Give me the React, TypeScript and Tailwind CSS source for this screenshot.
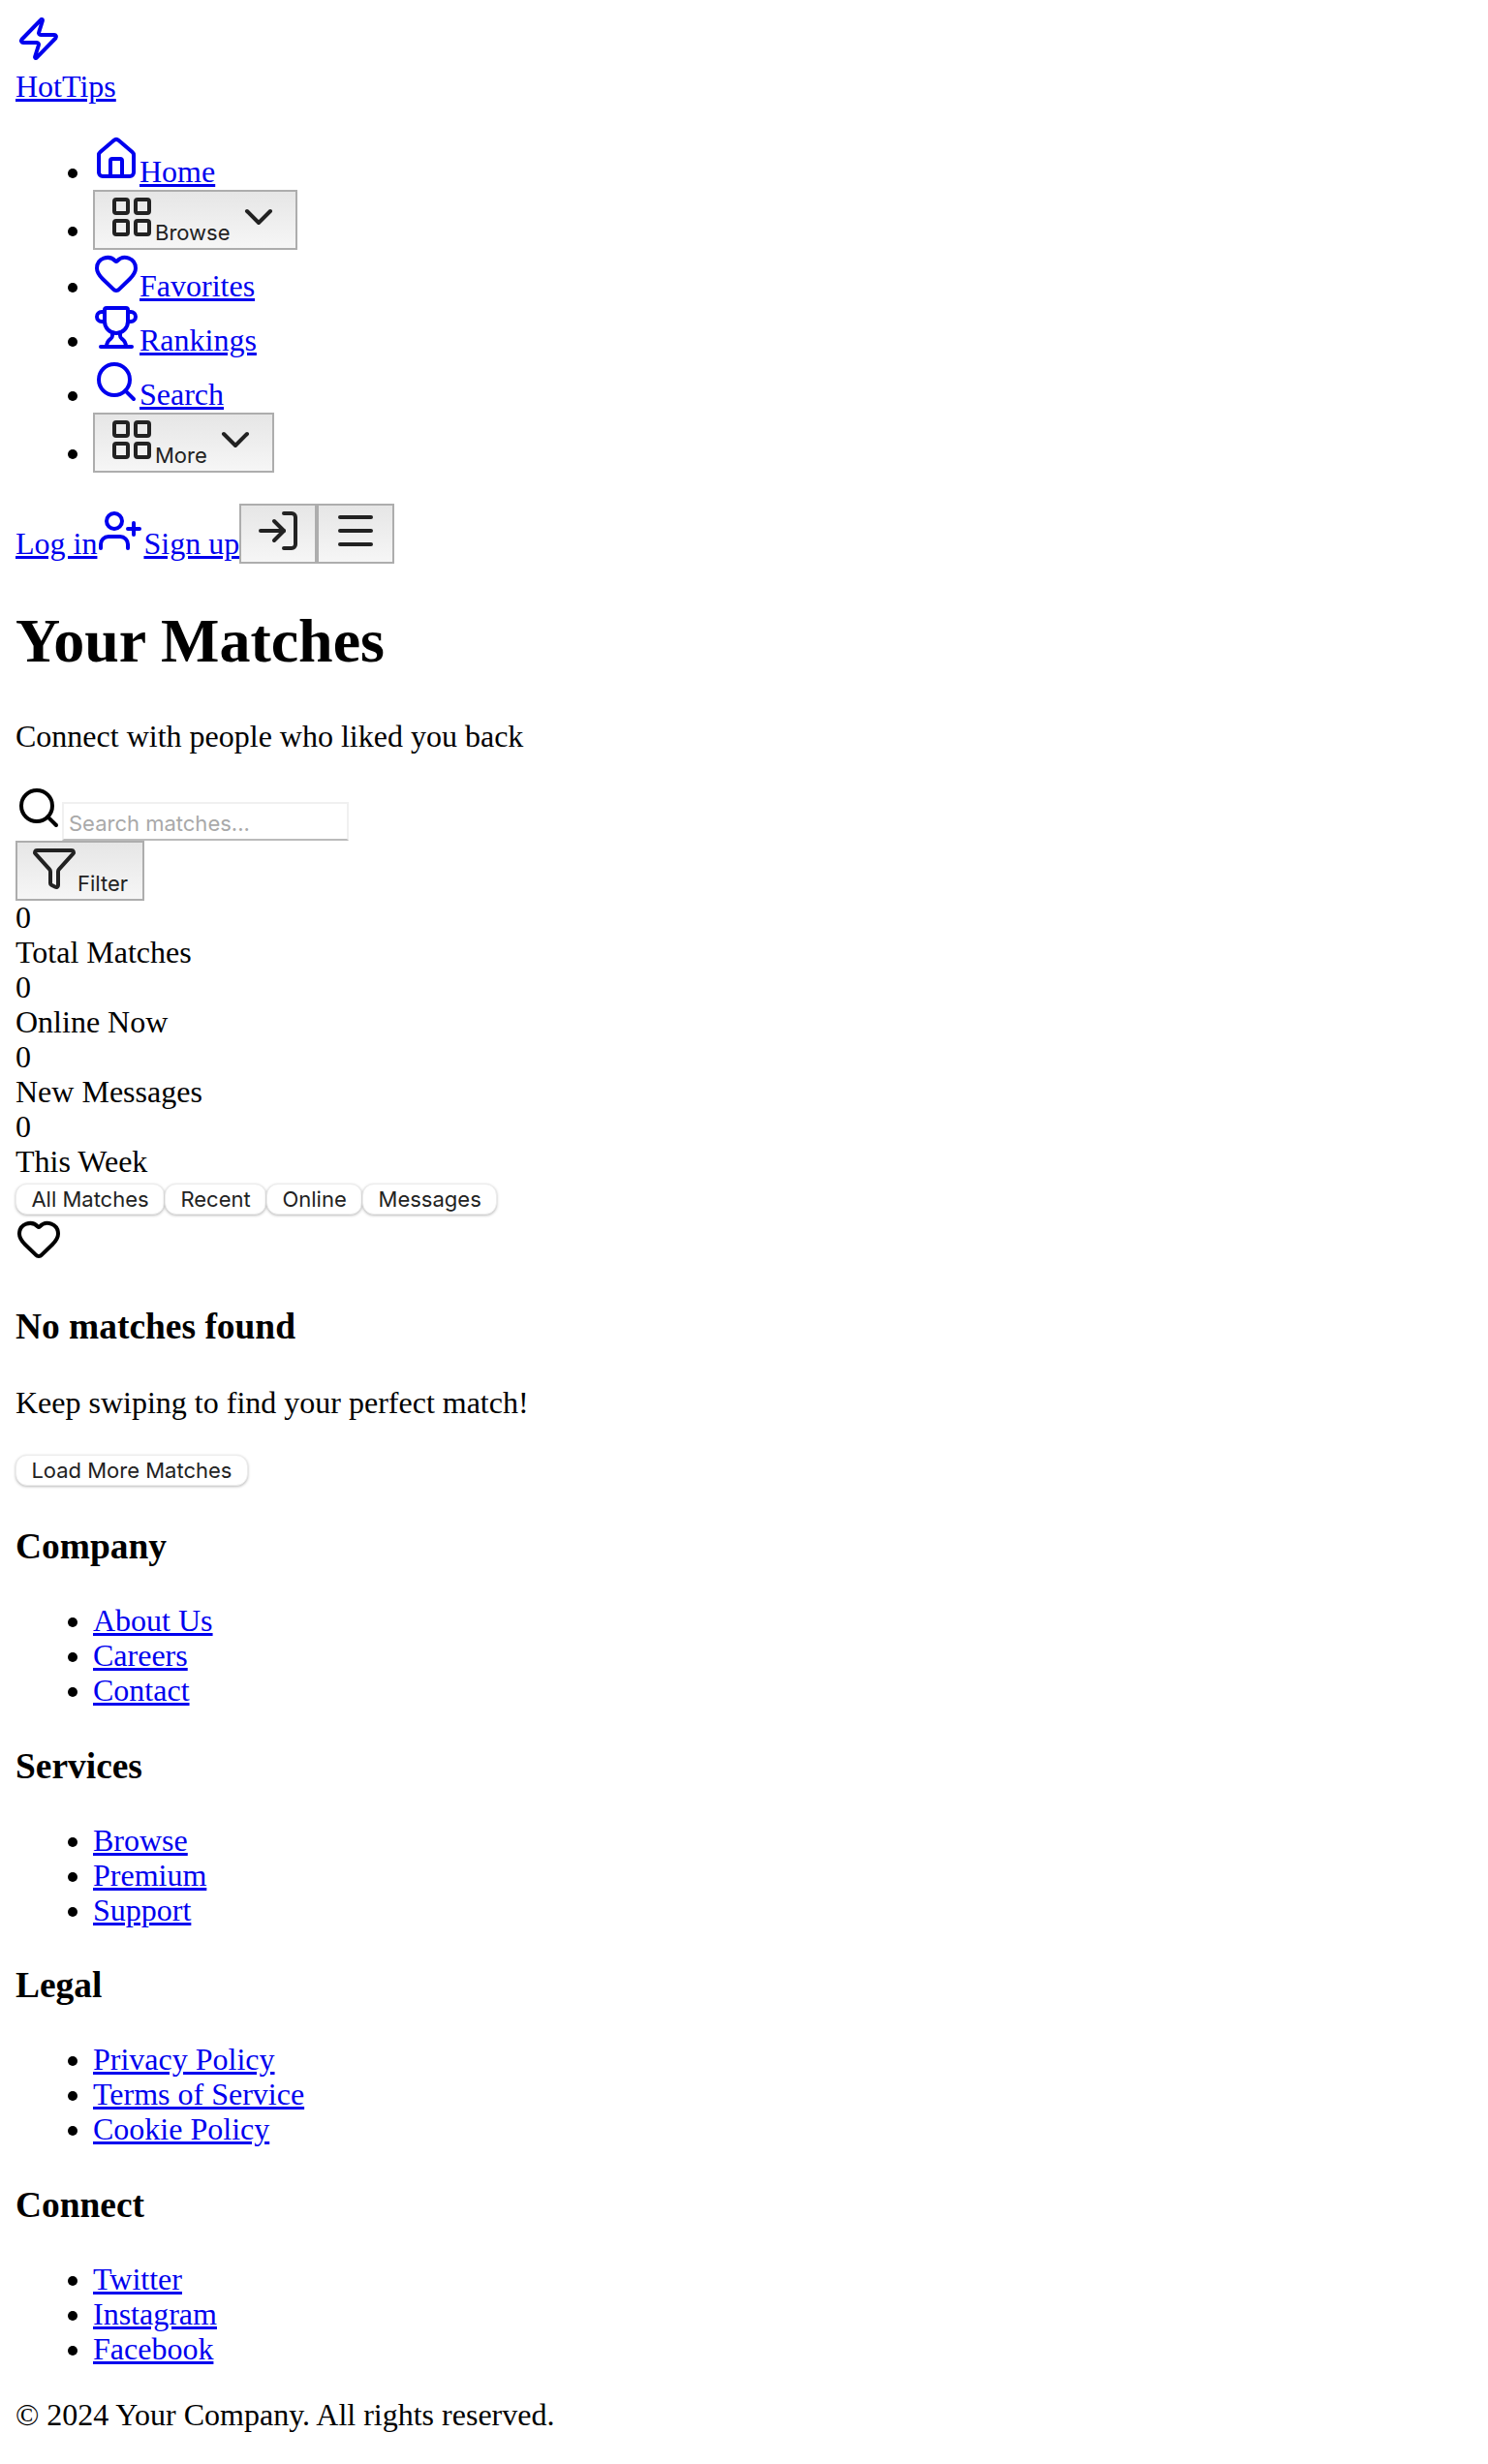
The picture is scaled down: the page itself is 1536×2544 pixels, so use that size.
import { Zap, House, LayoutGrid, ChevronDown, Heart, Trophy, Search, LogIn, UserPlus, Menu, Funnel } from "lucide-react";

const link = "text-[#0000ee] underline";
const icon = "inline w-12 h-12 align-baseline";
const iconLine = "leading-[37px]";
const grayBtn =
  "inline-block border-2 border-[#adadad] bg-gradient-to-b from-[#e6e6e6] to-[#f6f6f6] text-[#222222] text-[22px] leading-[26px] font-['Inter',sans-serif] px-[14px] pt-[2px] pb-[3px] align-baseline";
const whiteBtn =
  "block rounded-[12px] bg-white border border-[#ececec] shadow-[0_1px_3px_rgba(0,0,0,0.28)] text-[#222222] text-[22px] leading-[26px] font-['Inter',sans-serif] px-[15.4px] h-[32px]";

function FooterCol({ title, items }: { title: string; items: string[] }) {
  return (
    <div>
      <h3 className="text-[37.44px] leading-[44px] font-bold mt-[38.44px] mb-[36px]">{title}</h3>
      <ul className="list-disc pl-[80px] my-[32px]">
        {items.map((t) => (
          <li key={t}>
            <a className={link} href="#">{t}</a>
          </li>
        ))}
      </ul>
    </div>
  );
}

function Menuish({ label }: { label: string }) {
  return (
    <button className={grayBtn}>
      <LayoutGrid className={icon} />
      <span>{label}</span>
      <ChevronDown className={icon + " ml-[5px]"} />
    </button>
  );
}

export default function App() {
  return (
    <div className="m-4 bg-white text-black font-['Liberation_Serif',serif] text-[32px] leading-[36px]">
      <div>
        <a className={link + " block"} href="#">
          <div><Zap className={icon} /></div>
          <span>HotTips</span>
        </a>
        <ul className="list-disc pl-[80px] mt-[33px] mb-[32px]">
          <li className={iconLine}><a className={link} href="#"><House className={icon} />Home</a></li>
          <li><Menuish label="Browse" /></li>
          <li className={iconLine}><a className={link} href="#"><Heart className={icon} />Favorites</a></li>
          <li className={iconLine}><a className={link} href="#"><Trophy className={icon} />Rankings</a></li>
          <li className={iconLine}><a className={link} href="#"><Search className={icon} />Search</a></li>
          <li><Menuish label="More" /></li>
        </ul>
        <div>
          <a className={link} href="#">Log in</a>
          <a className={link} href="#"><UserPlus className={icon} />Sign up</a>
          <button className={grayBtn}><LogIn className={icon} /></button>
          <button className={grayBtn}><Menu className={icon} /></button>
        </div>
      </div>

      <h1 className="text-[64px] leading-[74px] font-bold my-[43px]">Your Matches</h1>
      <p className="my-[32px]">Connect with people who liked you back</p>

      <div>
        <Search className={icon} />
        <input
          placeholder="Search matches..."
          className="w-[296px] h-[40px] px-[5px] pt-[4px] pb-0 text-[22px] font-['Inter',sans-serif] border-2 border-[#f0f0f0] border-b-[#bbbbbb] placeholder:text-[#a9a9a9] outline-none"
        />
      </div>
      <button className={grayBtn + " block pr-[15px]"}>
        <Funnel className={icon} />
        <span>Filter</span>
      </button>

      <div className="-mt-px">
        <div>0</div><div>Total Matches</div>
        <div>0</div><div>Online Now</div>
        <div>0</div><div>New Messages</div>
        <div>0</div><div>This Week</div>
      </div>

      <div className="flex items-start pt-[5px] pb-[1px]">
        <button className={whiteBtn}>All Matches</button>
        <button className={whiteBtn}>Recent</button>
        <button className={whiteBtn}>Online</button>
        <button className={whiteBtn}>Messages</button>
      </div>

      <div>
        <div className={iconLine}><Heart className={icon} /></div>
        <h3 className="text-[37.44px] leading-[44px] font-bold my-[37.44px]">No matches found</h3>
        <p className="my-[32px]">Keep swiping to find your perfect match!</p>
        <div className="pt-[4px] pb-[3px]">
          <button className={whiteBtn}>Load More Matches</button>
        </div>
      </div>

      <FooterCol title="Company" items={["About Us", "Careers", "Contact"]} />
      <FooterCol title="Services" items={["Browse", "Premium", "Support"]} />
      <FooterCol title="Legal" items={["Privacy Policy", "Terms of Service", "Cookie Policy"]} />
      <FooterCol title="Connect" items={["Twitter", "Instagram", "Facebook"]} />
      <p className="my-[32px]">© 2024 Your Company. All rights reserved.</p>
    </div>
  );
}
